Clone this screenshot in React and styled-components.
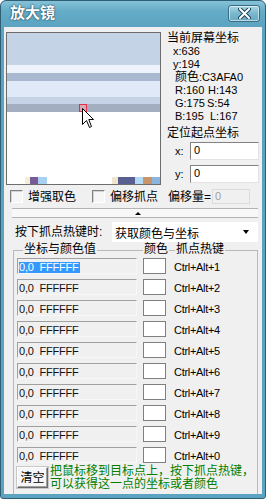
import React from 'react';
import styled, { createGlobalStyle } from 'styled-components';

const Global = createGlobalStyle`
  html, body { margin: 0; padding: 0; background: #ffffff; }
  body {
    font-family: "Liberation Sans", "Noto Sans CJK SC", sans-serif;
    font-size: 12px;
    color: #000;
  }
  * { box-sizing: border-box; }
`;

const Window = styled.div`
  width: 266px;
  height: 499px;
  display: flex;
  flex-direction: column;
  border: 1px solid #2e5f75;
  border-radius: 6px 6px 3px 3px;
  background: linear-gradient(180deg, #86c2d8 0px, #65acc7 10px, #5ba3c0 26px, #5ba3c0 100%);
  overflow: hidden;
`;

const TitleBar = styled.div`
  height: 26px;
  display: flex;
  align-items: center;
  padding: 0 5px 4px 9px;
`;

const Title = styled.div`
  font-family: "Noto Sans CJK SC", sans-serif;
  font-weight: 700;
  font-size: 15px;
  line-height: 18px;
  color: #ffffff;
  text-shadow: 0 0 2px #1f4a5c, 0 0 1px #1f4a5c;
`;

const CloseButton = styled.div`
  margin-left: auto;
  width: 32px;
  height: 17px;
  border: 1px solid #3c6d82;
  border-radius: 3px;
  background: linear-gradient(180deg, #a8d6e6 0%, #7ab8ce 50%, #68aac3 100%);
  box-shadow: inset 0 0 0 1px rgba(255, 255, 255, 0.55);
  display: flex;
  align-items: center;
  justify-content: center;
  margin-top: 2px;
`;

const Client = styled.div`
  flex: 1;
  margin: 0 3px 4px 3px;
  background: #f0f0f0;
  display: flex;
  flex-direction: column;
  min-height: 0;
`;

const TopSection = styled.div`
  display: flex;
  padding: 5px 0 0 2px;
  height: 158px;
`;

const Magnifier = styled.div`
  position: relative;
  width: 155px;
  height: 153px;
  flex-shrink: 0;
  border: 1px solid #6d6d6d;
  display: flex;
  flex-direction: column;
  overflow: hidden;
  background: #ffffff;
`;

const Band = styled.div`
  height: ${p => p.$h}px;
  background: ${p => p.$c};
  flex-shrink: 0;
`;

const Strip = styled.div`
  margin-top: auto;
  height: 7px;
  display: flex;
`;

const Seg = styled.div`
  background: ${p => p.$c};
  flex-shrink: 0;
`;

const Marker = styled.div`
  position: absolute;
  left: 72px;
  top: 71px;
  width: 8px;
  height: 8px;
  border: 1px solid #e0304a;
  background: #d9a7b4;
`;

const Cursor = styled.svg`
  position: absolute;
  left: 75px;
  top: 75px;
`;

const InfoPanel = styled.div`
  margin-left: 6px;
  margin-top: -1px;
  display: flex;
  flex-direction: column;
  flex: 1;
  min-width: 0;
`;

const Heading = styled.div`
  font-size: 12px;
  line-height: 14px;
  white-space: nowrap;
  margin-top: ${p => p.$mt || 0}px;
`;

const InfoLine = styled.div`
  font-size: 11px;
  line-height: 13px;
  padding-left: ${p => p.$indent}px;
  white-space: nowrap;
  display: flex;
`;

const CjkPart = styled.span`
  font-size: 12px;
`;

const Col = styled.span`
  width: ${p => p.$w}px;
  flex-shrink: 0;
`;

const InputRow = styled.div`
  display: flex;
  align-items: center;
  padding-left: 8px;
  margin-top: ${p => p.$mt}px;
`;

const InputLabel = styled.span`
  width: 15px;
  font-size: 11px;
  flex-shrink: 0;
`;

const Edit = styled.div`
  width: 69px;
  height: 18px;
  flex-shrink: 0;
  background: #ffffff;
  border-top: 1px solid #828282;
  border-left: 1px solid #828282;
  border-right: 1px solid #e3e3e3;
  border-bottom: 1px solid #e3e3e3;
  font-size: 11px;
  line-height: 15px;
  padding-left: 3px;
`;

const CheckRow = styled.div`
  display: flex;
  align-items: center;
  height: 17px;
  margin-top: 3px;
  padding-left: 6px;
`;

const CheckItem = styled.div`
  width: ${p => p.$w}px;
  display: flex;
  align-items: center;
  flex-shrink: 0;
`;

const CheckBox = styled.div`
  width: 13px;
  height: 13px;
  border-top: 1px solid #808080;
  border-left: 1px solid #808080;
  border-right: 1px solid #ffffff;
  border-bottom: 1px solid #ffffff;
  background: #f6f6f6;
  box-shadow: inset 1px 1px 0 #d4d4d4;
`;

const CheckLabel = styled.span`
  margin-left: 5px;
  font-size: 12px;
  line-height: 14px;
  white-space: nowrap;
`;

const OffsetLabel = styled.span`
  font-size: 12px;
  line-height: 14px;
  white-space: nowrap;
  width: 44px;
  flex-shrink: 0;
`;

const DisabledEdit = styled.div`
  width: 38px;
  height: 15px;
  background: #f0f0f0;
  border: 1px solid #dcdcdc;
  color: #a0a0a0;
  font-size: 11px;
  line-height: 13px;
  padding-left: 2px;
`;

const Splitter = styled.div`
  margin: 3px 4px 0 8px;
  height: 10px;
  border-top: 1px solid #b4b4b4;
  border-bottom: 1px solid #b4b4b4;
  background: #f8f8f8;
  display: flex;
  align-items: center;
  justify-content: center;
`;

const UpArrow = styled.div`
  width: 0;
  height: 0;
  border-left: 3px solid transparent;
  border-right: 3px solid transparent;
  border-bottom: 3px solid #000;
  margin-left: 6px;
`;

const HotkeyRow = styled.div`
  display: flex;
  align-items: center;
  margin-top: 4px;
  height: 20px;
  padding-left: 11px;
`;

const HotkeyLabel = styled.span`
  width: 97px;
  font-size: 12px;
  line-height: 14px;
  white-space: nowrap;
  flex-shrink: 0;
`;

const Dropdown = styled.div`
  width: 146px;
  height: 20px;
  background: #ffffff;
  display: flex;
  align-items: center;
  padding-left: 3px;
  padding-right: 9px;
  font-size: 12px;
`;

const DownArrow = styled.div`
  margin-left: auto;
  width: 0;
  height: 0;
  border-left: 3.5px solid transparent;
  border-right: 3.5px solid transparent;
  border-top: 4px solid #000;
`;

const GroupBox = styled.div`
  margin: 8px 4px 0 9px;
  border: 1px solid #b9b9b9;
  border-bottom: none;
  flex: 1;
  display: flex;
  flex-direction: column;
`;

const GroupHeader = styled.div`
  display: flex;
  height: 14px;
  margin-top: -9px;
`;

const HeaderLabel = styled.span`
  margin-left: ${p => p.$ml}px;
  padding: 0 1px;
  background: #f0f0f0;
  font-size: 12px;
  line-height: 14px;
  white-space: nowrap;
`;

const Rows = styled.div`
  display: flex;
  flex-direction: column;
  padding-left: 3px;
  margin-top: 1px;
`;

const Row = styled.div`
  display: flex;
  align-items: center;
  height: 17px;
  margin-bottom: 4px;
`;

const Field = styled.div`
  width: 120px;
  height: 16px;
  border-top: 1px solid #a0a0a0;
  border-left: 1px solid #a0a0a0;
  border-right: 1px solid #f7f7f7;
  border-bottom: 1px solid #f7f7f7;
  font-size: 11px;
  line-height: 14px;
  padding-left: 1px;
  padding-top: 1px;
  white-space: pre;
  letter-spacing: -0.2px;
  color: #111;
`;

const Selected = styled.span`
  background: #3399ff;
  color: #ffffff;
  display: inline-block;
  line-height: 11px;
  padding-right: 1px;
`;

const ColorBox = styled.div`
  margin-left: 6px;
  width: 23px;
  height: 16px;
  border: 1px solid #7f7f7f;
  background: #ffffff;
  margin-top: 1px;
`;

const KeyLabel = styled.span`
  margin-left: 8px;
  font-size: 11px;
  letter-spacing: -0.3px;
  white-space: nowrap;
  padding-top: 2px;
`;

const BottomRow = styled.div`
  display: flex;
  padding-left: 3px;
`;

const ClearButton = styled.div`
  width: 31px;
  height: 21px;
  border-top: 1px solid #ffffff;
  border-left: 1px solid #ffffff;
  border-right: 1px solid #6a6a6a;
  border-bottom: 1px solid #6a6a6a;
  box-shadow: inset -1px -1px 0 #a0a0a0;
  background: #f6f6f6;
  outline: 1px solid #c8c8c8;
  display: flex;
  align-items: center;
  justify-content: center;
  font-size: 12px;
  line-height: 14px;
`;

const Hint = styled.div`
  margin-left: 2px;
  margin-top: -2px;
  color: #008000;
  font-size: 12px;
  line-height: 13px;
  white-space: nowrap;
`;

const bands = [
  { h: 32, c: '#c5d3e7' },
  { h: 8, c: '#eef3fb' },
  { h: 8, c: '#a9b9cf' },
  { h: 16, c: '#e0e9f8' },
  { h: 7, c: '#c6d2e6' },
  { h: 8, c: '#a3afc0' },
];

const segs = [
  { w: 18, c: '#ffffff' },
  { w: 5, c: '#f3efd1' },
  { w: 8, c: '#7a5b9a' },
  { w: 9, c: '#a8d0f0' },
  { w: 65, c: '#ffffff' },
  { w: 6, c: '#efe6d0' },
  { w: 17, c: '#5a5f92' },
  { w: 8, c: '#b3daf2' },
  { w: 9, c: '#c8946a' },
  { w: 8, c: '#8cb4e0' },
];

const keys = ['1', '2', '3', '4', '5', '6', '7', '8', '9', '0'];

export default function App() {
  return (
    <>
      <Global />
      <Window>
        <TitleBar>
          <Title>放大镜</Title>
          <CloseButton>
            <svg width="13" height="11" viewBox="0 0 13 11">
              <path d="M2 1 L6.5 5.5 M11 1 L6.5 5.5 M2 10 L6.5 5.5 M11 10 L6.5 5.5" stroke="#1d4558" strokeWidth="4" strokeLinecap="round" />
              <path d="M2 1 L6.5 5.5 M11 1 L6.5 5.5 M2 10 L6.5 5.5 M11 10 L6.5 5.5" stroke="#ffffff" strokeWidth="2" strokeLinecap="round" />
            </svg>
          </CloseButton>
        </TitleBar>
        <Client>
          <TopSection>
            <Magnifier>
              {bands.map((b, i) => (
                <Band key={i} $h={b.h} $c={b.c} />
              ))}
              <Strip>
                {segs.map((s, i) => (
                  <Seg key={i} $c={s.c} style={{ width: s.w }} />
                ))}
              </Strip>
              <Marker />
              <Cursor width="13" height="21" viewBox="0 0 13 21">
                <path d="M0.5 0.5 L0.5 16.5 L4.5 12.5 L7.5 19.5 L9.5 18.5 L6.8 11.5 L11.5 11.5 Z" fill="#ffffff" stroke="#000000" strokeWidth="1" />
              </Cursor>
            </Magnifier>
            <InfoPanel>
              <Heading>当前屏幕坐标</Heading>
              <InfoLine $indent={6}>x:636</InfoLine>
              <InfoLine $indent={6}>y:194</InfoLine>
              <InfoLine $indent={8}><CjkPart>颜色</CjkPart>:C3AFA0</InfoLine>
              <InfoLine $indent={8}><Col $w={33}>R:160</Col>H:143</InfoLine>
              <InfoLine $indent={8}><Col $w={32}>G:175</Col>S:54</InfoLine>
              <InfoLine $indent={8}><Col $w={35}>B:195</Col>L:167</InfoLine>
              <Heading $mt={3}>定位起点坐标</Heading>
              <InputRow $mt={2}>
                <InputLabel>x:</InputLabel>
                <Edit>0</Edit>
              </InputRow>
              <InputRow $mt={5}>
                <InputLabel>y:</InputLabel>
                <Edit>0</Edit>
              </InputRow>
            </InfoPanel>
          </TopSection>
          <CheckRow>
            <CheckItem $w={82}>
              <CheckBox />
              <CheckLabel>增强取色</CheckLabel>
            </CheckItem>
            <CheckItem $w={76}>
              <CheckBox />
              <CheckLabel>偏移抓点</CheckLabel>
            </CheckItem>
            <OffsetLabel>偏移量=</OffsetLabel>
            <DisabledEdit>0</DisabledEdit>
          </CheckRow>
          <Splitter>
            <UpArrow />
          </Splitter>
          <HotkeyRow>
            <HotkeyLabel>按下抓点热键时:</HotkeyLabel>
            <Dropdown>
              获取颜色与坐标
              <DownArrow />
            </Dropdown>
          </HotkeyRow>
          <GroupBox>
            <GroupHeader>
              <HeaderLabel $ml={9}>坐标与颜色值</HeaderLabel>
              <HeaderLabel $ml={46}>颜色 </HeaderLabel>
              <HeaderLabel $ml={6}>抓点热键</HeaderLabel>
            </GroupHeader>
            <Rows>
              {keys.map((k, i) => (
                <Row key={k}>
                  <Field>
                    {i === 0 ? <Selected>0,0  FFFFFF</Selected> : '0,0  FFFFFF'}
                  </Field>
                  <ColorBox />
                  <KeyLabel>Ctrl+Alt+{k}</KeyLabel>
                </Row>
              ))}
            </Rows>
            <BottomRow>
              <ClearButton>清空</ClearButton>
              <Hint>
                把鼠标移到目标点上，按下抓点热键，
                <br />
                可以获得这一点的坐标或者颜色
              </Hint>
            </BottomRow>
          </GroupBox>
        </Client>
      </Window>
    </>
  );
}
